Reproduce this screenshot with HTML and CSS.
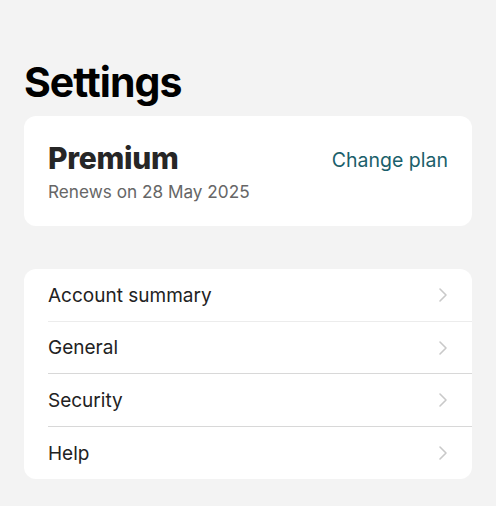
FILE: index.html
```html
<!DOCTYPE html>
<html>
<head>
<meta charset="utf-8">
<link rel="stylesheet" href="styles.css">
</head>
<body>
<main class="page">
  <h1 class="title">Settings</h1>
  <section class="card plan">
    <div class="plan-info">
      <div class="plan-name">Premium</div>
      <div class="plan-renew">Renews on 28 May 2025</div>
    </div>
    <a class="plan-link">Change plan</a>
  </section>
  <ul class="card list">
    <li class="row"><span>Account summary</span><svg class="chev" viewBox="0 0 10 16" width="10" height="16"><path d="M2 2 L8 8 L2 14" fill="none" stroke="#c9c9c9" stroke-width="1.6" stroke-linecap="round" stroke-linejoin="round"/></svg></li>
    <li class="row"><span>General</span><svg class="chev" viewBox="0 0 10 16" width="10" height="16"><path d="M2 2 L8 8 L2 14" fill="none" stroke="#c9c9c9" stroke-width="1.6" stroke-linecap="round" stroke-linejoin="round"/></svg></li>
    <li class="row"><span>Security</span><svg class="chev" viewBox="0 0 10 16" width="10" height="16"><path d="M2 2 L8 8 L2 14" fill="none" stroke="#c9c9c9" stroke-width="1.6" stroke-linecap="round" stroke-linejoin="round"/></svg></li>
    <li class="row"><span>Help</span><svg class="chev" viewBox="0 0 10 16" width="10" height="16"><path d="M2 2 L8 8 L2 14" fill="none" stroke="#c9c9c9" stroke-width="1.6" stroke-linecap="round" stroke-linejoin="round"/></svg></li>
  </ul>
</main>
</body>
</html>
```

FILE: styles.css
```css
html, body {
  margin: 0;
  background: #f3f3f3;
  font-family: Inter, "Noto Sans", sans-serif;
  color: #222;
}
.page {
  padding: 58px 24px 0 24px;
}
.title {
  margin: 0 0 10px 0;
  font-size: 41px;
  font-weight: 700;
  line-height: 48px;
  color: #000;
  letter-spacing: -1px;
}
.card {
  background: #fff;
  border-radius: 12px;
}
.plan {
  display: flex;
  justify-content: space-between;
  align-items: flex-start;
  padding: 25px 24px 0 24px;
  height: 110px;
  box-sizing: border-box;
}
.plan-name {
  font-size: 30px;
  font-weight: 800;
  line-height: 34px;
  letter-spacing: -0.3px;
  color: #262626;
}
.plan-renew {
  margin-top: 6px;
  font-size: 17.2px;
  line-height: 22px;
  color: #666;
}
.plan-link {
  margin-top: 7px;
  font-size: 19.5px;
  line-height: 24px;
  color: #1b5f6b;
}
.list {
  list-style: none;
  margin: 43px 0 0 0;
  padding: 0 0 0 24px;
}
.row {
  display: flex;
  justify-content: space-between;
  align-items: center;
  box-sizing: border-box;
  height: 52.5px;
  padding-right: 24px;
  padding-top: 1px;
  font-size: 19px;
  color: #222;
  border-bottom: 1px solid #d8d8d8;
}
.row:first-child {
  border-bottom-color: #ececec;
}
.row:last-child {
  border-bottom: none;
}
.chev {
  display: block;
}
```
